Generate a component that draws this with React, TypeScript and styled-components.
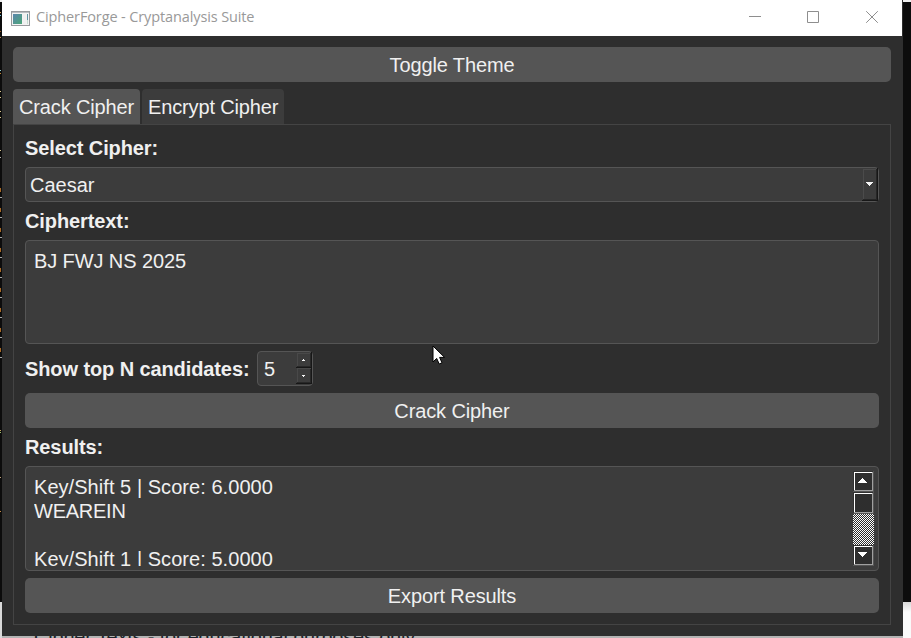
import React from 'react';
import styled, { createGlobalStyle, css } from 'styled-components';

const Global = createGlobalStyle`
  * { box-sizing: border-box; }
  html, body { margin: 0; width: 911px; height: 638px; overflow: hidden; background: #0c0c0c; }
  body { font-family: "Liberation Sans", Arial, sans-serif; }
`;

const Desktop = styled.div`
  position: relative;
  width: 911px;
  height: 638px;
  overflow: hidden;
  padding-left: 2px;
  background: linear-gradient(#f0f0f0 0 2px, #0c0c0c 2px 602px, #d8d8d8 602px, #fafafa 612px);
`;

const EditorEdge = styled.svg`
  position: absolute;
  left: 0;
  top: 0;
`;

const PageLine = styled.div`
  position: absolute;
  left: 2px;
  top: 636px;
  width: 901px;
  height: 2px;
  overflow: hidden;
  background: #b4b4b4;
  color: #20242a;
  span { position: absolute; left: 32px; top: -9px; font-size: 20px; line-height: 20px; letter-spacing: -0.2px; white-space: nowrap; }
`;

const Window = styled.main`
  position: relative;
  width: 901px;
  height: 636px;
  background: #2e2e2e;
  display: flex;
  flex-direction: column;
  color: #f0f0f0;
  font-size: 20px;
  line-height: 24px;
`;

const TitleBar = styled.header`
  height: 36px;
  width: 900px;
  background: #fff;
  display: flex;
  align-items: center;
  padding-left: 9px;
`;

const Title = styled.span`
  margin-left: 6px;
  padding-bottom: 2px;
  flex: 1;
  color: #999;
  font: 14.5px/20px "Open Sans", "Noto Sans", sans-serif;
  letter-spacing: -0.12px;
  white-space: nowrap;
`;

const Controls = styled.div`
  display: flex;
  svg { display: block; }
`;

const Body = styled.div`
  padding: 11px 12px 11px 11px;
  display: flex;
  flex-direction: column;
`;

const Button = styled.button`
  height: 35px;
  flex: none;
  border: 0;
  border-radius: 5px;
  background: #555;
  color: #f0f0f0;
  font: inherit;
  letter-spacing: -0.12px;
  padding: 1px 0 0;
  width: 100%;
`;

const Tabs = styled.div`
  display: flex;
  gap: 2px;
  margin-top: 7px;
`;

const Tab = styled.div<{ $active?: boolean }>`
  height: 35px;
  width: ${p => (p.$active ? 127 : 142)}px;
  padding: 6px 0 0 6px;
  letter-spacing: -0.14px;
  white-space: nowrap;
  border-radius: 4px 4px 0 0;
  background: ${p => (p.$active ? '#555' : '#3c3c3c')};
`;

const Pane = styled.section`
  height: 501px;
  border: 1px solid #444;
  padding: 11px;
  display: flex;
  flex-direction: column;
  gap: 7px;
`;

const Label = styled.div`
  height: 24px;
  font-weight: bold;
  letter-spacing: -0.1px;
  white-space: nowrap;
`;

const field = css`
  border: 1px solid #555;
  border-radius: 4px;
  background: #3c3c3c;
`;

const Select = styled.div`
  ${field}
  height: 35px;
  display: flex;
  justify-content: space-between;
  padding: 0 0 0 4px;
  line-height: 35px;
`;

const TextBox = styled.div<{ $h: number }>`
  ${field}
  height: ${p => p.$h}px;
  display: flex;
  justify-content: space-between;
  padding: 4px 4px 4px 8px;
  overflow: hidden;
`;

const Text = styled.div<{ $spacing: number }>`
  padding-top: 4px;
  white-space: pre;
  overflow: hidden;
  letter-spacing: ${p => p.$spacing}px;
`;

const Line = styled.div<{ $spacing?: number }>`
  height: 24px;
  letter-spacing: ${p => p.$spacing ?? 0}px;
`;

const Row = styled.div`
  display: flex;
  height: 35px;
  align-items: center;
`;

const CountLabel = styled(Label)`
  width: 232px;
`;

const Spin = styled.div`
  ${field}
  width: 56px;
  height: 35px;
  display: flex;
  justify-content: space-between;
  padding-left: 6px;
  line-height: 34px;
  svg { display: block; }
`;

const Cursor = styled.svg`
  position: absolute;
  left: 432px;
  top: 345px;
`;

const AppIcon = () => (
  <svg width="19" height="15" viewBox="0 0 19 15" shapeRendering="crispEdges">
    <defs>
      <linearGradient id="screen" x1="0" y1="0" x2="1" y2="1">
        <stop offset="0" stopColor="#5c86ad" />
        <stop offset="1" stopColor="#4ba678" />
      </linearGradient>
    </defs>
    <path fill="#f3f3f3" stroke="#999b9e" d="M.5.5h18v14H.5z" />
    <path fill="#b9bdc2" d="M1 1h17v1H1z" />
    <path fill="url(#screen)" d="M2 3h9v10H2z" />
    <path fill="#f0f0f0" d="M12 3h3v10h-3z" />
    <path fill="#6395a3" d="M16 3h1v6h-1z" />
    <path fill="#c5dcd0" d="M16 9h1v4h-1z" />
  </svg>
);

const marks: [number, string][] = [
  [12, '#d6a465'], [15, '#6fc5de'], [31, '#9a5b28'], [37, '#b9894e'], [70, '#8fd5da'], [73, '#c08634'],
  [91, '#d9c58d'], [97, '#d9c58d'], [111, '#d9c58d'], [117, '#d9c58d'], [150, '#d5c28d'], [157, '#b5b5b5'],
  [430, '#c5a55c'], [432, '#9dbd6b'], [477, '#c0a17a'], [511, '#c38b48'],
];

const Edge = () => (
  <EditorEdge width="2" height="638" shapeRendering="crispEdges">
    <path fill="#0c0c0c" d="M0 0h2v602H0z" />
    <path fill="#d9d9d9" d="M0 602h2v36H0z" />
    <path fill="#eee" d="M0 0h2v2H0z" />
    {marks.map(([y, fill]) => <rect key={y} x="0" y={y} width="1" height="1" fill={fill} />)}
    {Array.from({ length: 9 }, (_, i) => (
      <React.Fragment key={i}>
        <rect y={188 + i * 20} width="1" height="4" fill="#a96a26" />
        <rect y={197 + i * 20} width="2" height="1" fill="#aaa" />
      </React.Fragment>
    ))}
  </EditorEdge>
);

const DropArrow = () => (
  <svg width="16" height="33" viewBox="862 168 16 33" shapeRendering="crispEdges">
    <path fill="#4b4b4b" d="M863 169h14v1h-14zM863 169h1v30h-1z" />
    <path fill="#171717" d="M862 200h16v1h-16zM877 168h1v33h-1z" />
    <path fill="#262626" d="M863 199h14v1h-14zM876 169h1v31h-1z" />
    <path fill="#f5f5f5" d="M866 182h7v1h-7zM867 183h5v1h-5zM868 184h3v1h-3zM869 185h1v1h-1z" />
  </svg>
);

const SpinArrows = () => (
  <svg width="16" height="33" viewBox="296 352 16 33" shapeRendering="crispEdges">
    <path fill="#494949" d="M297 353h14v1h-14zM297 353h1v13h-1zM297 368h14v1h-14zM297 368h1v14h-1z" />
    <path fill="#171717" d="M296 367h16v1h-16zM296 383h16v1h-16zM311 352h1v32h-1z" />
    <path fill="#282828" d="M297 366h14v1h-14zM297 382h14v1h-14zM310 353h1v13h-1zM310 369h1v13h-1z" />
    <path fill="#f5f5f5" d="M303 359h1v1h-1zM302 360h3v1h-3zM302 375h3v1h-3zM303 376h1v1h-1z" />
  </svg>
);

const ScrollBar = () => (
  <svg width="21" height="95" viewBox="853 471 21 95" shapeRendering="crispEdges">
    <defs>
      <pattern id="check" width="2" height="2" patternUnits="userSpaceOnUse">
        <path fill="#2e2e2e" d="M0 0h2v2H0z" />
        <path fill="#fff" d="M0 0h1v1H0zM1 1h1v1H1z" />
      </pattern>
    </defs>
    <path fill="url(#check)" d="M853 514h21v31h-21z" />
    {[[471, 21], [492, 22], [545, 21]].map(([y, h]) => (
      <React.Fragment key={y}>
        <rect x="853" y={y} width="21" height={h} fill="#555" />
        <rect x="853" y={y} width="20" height={h - 1} fill="#303030" />
        <rect x="854" y={y + 1} width="19" height={h - 2} fill="#a0a0a0" />
        <rect x="854" y={y + 1} width="18" height={h - 3} fill="#fff" />
        <rect x="855" y={y + 2} width="17" height={h - 4} fill="#2e2e2e" />
      </React.Fragment>
    ))}
    <path fill="#fff" d="M862 478h1v1h-1zM861 479h3v1h-3zM860 480h5v1h-5zM859 481h7v1h-7zM858 482h9v1h-9z" />
    <path fill="#fff" d="M858 552h9v1h-9zM859 553h7v1h-7zM860 554h5v1h-5zM861 555h3v1h-3zM862 556h1v1h-1z" />
  </svg>
);

export default function App() {
  return (
    <Desktop>
      <Global />
      <Edge />
      <PageLine><span>Cipher Texts - for educational purposes only</span></PageLine>
      <Window>
        <TitleBar>
          <AppIcon />
          <Title>CipherForge - Cryptanalysis Suite</Title>
          <Controls>
            <svg width="153" height="36" viewBox="749 0 153 36" fill="none" stroke="#8e8e8e">
              <path d="M749 16.5h12M807.5 11.5h11v11h-11zM866.2 11.2l11.6 11.6M877.8 11.2l-11.6 11.6" />
            </svg>
          </Controls>
        </TitleBar>
        <Body>
          <Button>Toggle Theme</Button>
          <Tabs>
            <Tab $active>Crack Cipher</Tab>
            <Tab>Encrypt Cipher</Tab>
          </Tabs>
          <Pane>
            <Label>Select Cipher:</Label>
            <Select>Caesar<DropArrow /></Select>
            <Label>Ciphertext:</Label>
            <TextBox $h={104}><Text $spacing={-0.1}>BJ FWJ NS 2025</Text></TextBox>
            <Row>
              <CountLabel>Show top N candidates:</CountLabel>
              <Spin>5<SpinArrows /></Spin>
            </Row>
            <Button>Crack Cipher</Button>
            <Label>Results:</Label>
            <TextBox $h={105}>
              <Text $spacing={0}>
                <Line $spacing={0.05}>Key/Shift 5 | Score: 6.0000</Line>
                <Line $spacing={-0.25}>WEAREIN</Line>
                <Line />
                <Line $spacing={0.05}>Key/Shift 1 | Score: 5.0000</Line>
              </Text>
              <ScrollBar />
            </TextBox>
            <Button>Export Results</Button>
          </Pane>
        </Body>
      </Window>
      <Cursor width="13" height="20" viewBox="0 0 13 20">
        <path d="M1 1v16l3.7-3.6 2.5 5.6 2.8-1.2-2.4-5.4h5z" fill="#fff" stroke="#000" />
      </Cursor>
    </Desktop>
  );
}
